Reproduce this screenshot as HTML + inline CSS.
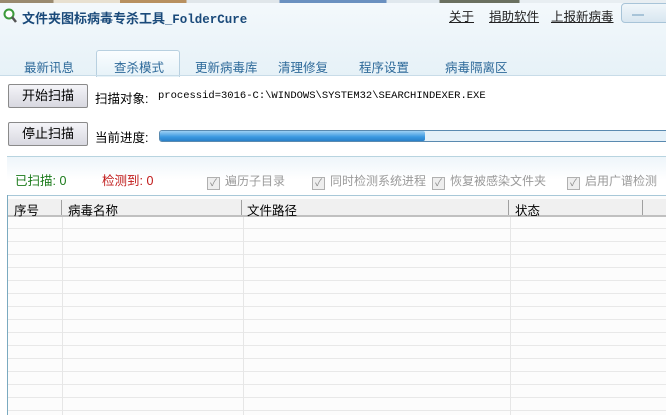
<!DOCTYPE html>
<html><head><meta charset="utf-8"><style>
body{margin:0;width:666px;height:415px;overflow:hidden;background:#fff;font-family:"Liberation Sans","Noto Sans CJK SC","WenQuanYi Zen Hei",sans-serif;font-size:12px;position:relative}
.a{position:absolute;white-space:nowrap}
.tab{position:absolute;top:57px;font-size:12.5px;color:#2e6a9a}
.btn{position:absolute;left:8px;width:78px;height:22px;border:1px solid #8a8a8a;border-radius:2px;background:linear-gradient(#f4f4f8,#d8d8e0);text-align:center;line-height:22px;font-size:13px;color:#000}
.cb{position:absolute;top:172px;font-size:12px;color:#9a9a9a}
.cb i{display:inline-block;width:11px;height:11px;border:1px solid #b0b0b0;background:#eee;vertical-align:-1px;margin-right:5px;font-style:normal;font-size:10px;line-height:11px;text-align:center;color:#888}
</style></head><body>
<div class="a" style="left:0;top:0;width:666px;height:76px;background:linear-gradient(#f4f9fc,#e6f1f7)"></div>
<div class="a" style="left:0;top:0;width:666px;height:3px;background:linear-gradient(90deg,#9a8a70 0 8%,#e8e0d0 8% 18%,#b89060 18% 28%,#e0e6ea 28% 42%,#6a90c0 42% 58%,#e0e8ee 58% 66%,#6a7060 66% 78%,#e8eef2 78%)"></div>
<svg class="a" style="left:2px;top:7px" width="16" height="18"><circle cx="7" cy="7" r="4.5" fill="#fff" stroke="#3a9a3a" stroke-width="2"/><line x1="10" y1="10" x2="14" y2="15" stroke="#555" stroke-width="2.5"/></svg>
<div class="a" style="left:22px;top:8px;font-weight:bold;font-size:13px;color:#1a4a7a">文件夹图标病毒专杀工具_<span style="font-family:'Liberation Mono',monospace;font-size:12.5px">FolderCure</span></div>
<div class="a" style="left:449px;top:6px;text-decoration:underline;color:#222;font-size:12.5px">关于</div>
<div class="a" style="left:489px;top:6px;text-decoration:underline;color:#222;font-size:12.5px">捐助软件</div>
<div class="a" style="left:551px;top:6px;text-decoration:underline;color:#222;font-size:12.5px">上报新病毒</div>
<div class="a" style="left:621px;top:3px;width:50px;height:18px;border:1px solid #a8c4d8;border-radius:4px;background:linear-gradient(#f0f6fa,#d8e6f0)"></div>
<div class="a" style="left:632px;top:14px;width:12px;height:2px;background:#a8c4d8"></div>
<div class="a" style="left:96px;top:50px;width:82px;height:26px;border:1px solid #b8d0e0;border-bottom:none;border-radius:3px 3px 0 0;background:linear-gradient(#fafdff,#e6f2f8)"></div>
<div class="a" style="left:0;top:75px;width:666px;height:1px;background:#c8dce8"></div>
<div class="tab" style="left:24px">最新讯息</div>
<div class="tab" style="left:114px">查杀模式</div>
<div class="tab" style="left:195px">更新病毒库</div>
<div class="tab" style="left:278px">清理修复</div>
<div class="tab" style="left:359px">程序设置</div>
<div class="tab" style="left:445px">病毒隔离区</div>
<div class="btn" style="top:84px">开始扫描</div>
<div class="a" style="left:95px;top:88px;font-size:12.5px">扫描对象:</div>
<div class="a" style="left:158px;top:90px;font-family:'Liberation Mono',monospace;font-size:10.5px">processid=3016-C:\WINDOWS\SYSTEM32\SEARCHINDEXER.EXE</div>
<div class="btn" style="top:122px">停止扫描</div>
<div class="a" style="left:95px;top:127px;font-size:12.5px">当前进度:</div>
<div class="a" style="left:159px;top:130px;width:520px;height:10px;border:1px solid #5a8ab0;border-radius:3px;background:#e4f0f8"></div>
<div class="a" style="left:160px;top:131px;width:265px;height:10px;border-radius:2px;background:linear-gradient(#9cd0f4,#3a98e0 60%,#2a80c8)"></div>
<div class="a" style="left:7px;top:156px;width:666px;height:1px;background:#b8d4e0"></div>
<div class="a" style="left:7px;top:157px;width:666px;height:38px;background:linear-gradient(#eef5fa,#fff 60%)"></div>
<div class="a" style="left:15px;top:170px;color:#1a7a1a;font-size:12.5px">已扫描: 0</div>
<div class="a" style="left:102px;top:170px;color:#c01818;font-size:12.5px">检测到: 0</div>
<div class="cb" style="left:207px"><i>✓</i>遍历子目录</div>
<div class="cb" style="left:312px"><i>✓</i>同时检测系统进程</div>
<div class="cb" style="left:432px"><i>✓</i>恢复被感染文件夹</div>
<div class="cb" style="left:567px"><i>✓</i>启用广谱检测</div>
<div class="a" style="left:7px;top:195px;width:666px;height:1px;background:#a8c8d8"></div>
<div class="a" style="left:7px;top:195px;width:1px;height:220px;background:#7aaac0"></div>
<div class="a" style="left:8px;top:196px;width:660px;height:219px;background:#fcfcfc"></div>
<div class="a" style="left:8px;top:216px;width:660px;height:199px;background:repeating-linear-gradient(#fcfcfc 0 12px,#e8e8e8 12px 13px)"></div>
<div class="a" style="left:62px;top:216px;width:1px;height:199px;background:#e6e6e6"></div>
<div class="a" style="left:243px;top:216px;width:1px;height:199px;background:#e6e6e6"></div>
<div class="a" style="left:510px;top:216px;width:1px;height:199px;background:#e6e6e6"></div>
<div class="a" style="left:8px;top:199px;width:660px;height:16px;background:#f0f0f0;border-bottom:2px solid #c0c0c0"></div>
<div class="a" style="left:61px;top:200px;width:1px;height:15px;background:#a0a0a0"></div>
<div class="a" style="left:241px;top:200px;width:1px;height:15px;background:#a0a0a0"></div>
<div class="a" style="left:508px;top:200px;width:1px;height:15px;background:#a0a0a0"></div>
<div class="a" style="left:642px;top:200px;width:1px;height:15px;background:#a0a0a0"></div>
<div class="a" style="left:14px;top:200px;font-size:12.5px">序号</div>
<div class="a" style="left:68px;top:200px;font-size:12.5px">病毒名称</div>
<div class="a" style="left:247px;top:200px;font-size:12.5px">文件路径</div>
<div class="a" style="left:515px;top:200px;font-size:12.5px">状态</div>
</body></html>
